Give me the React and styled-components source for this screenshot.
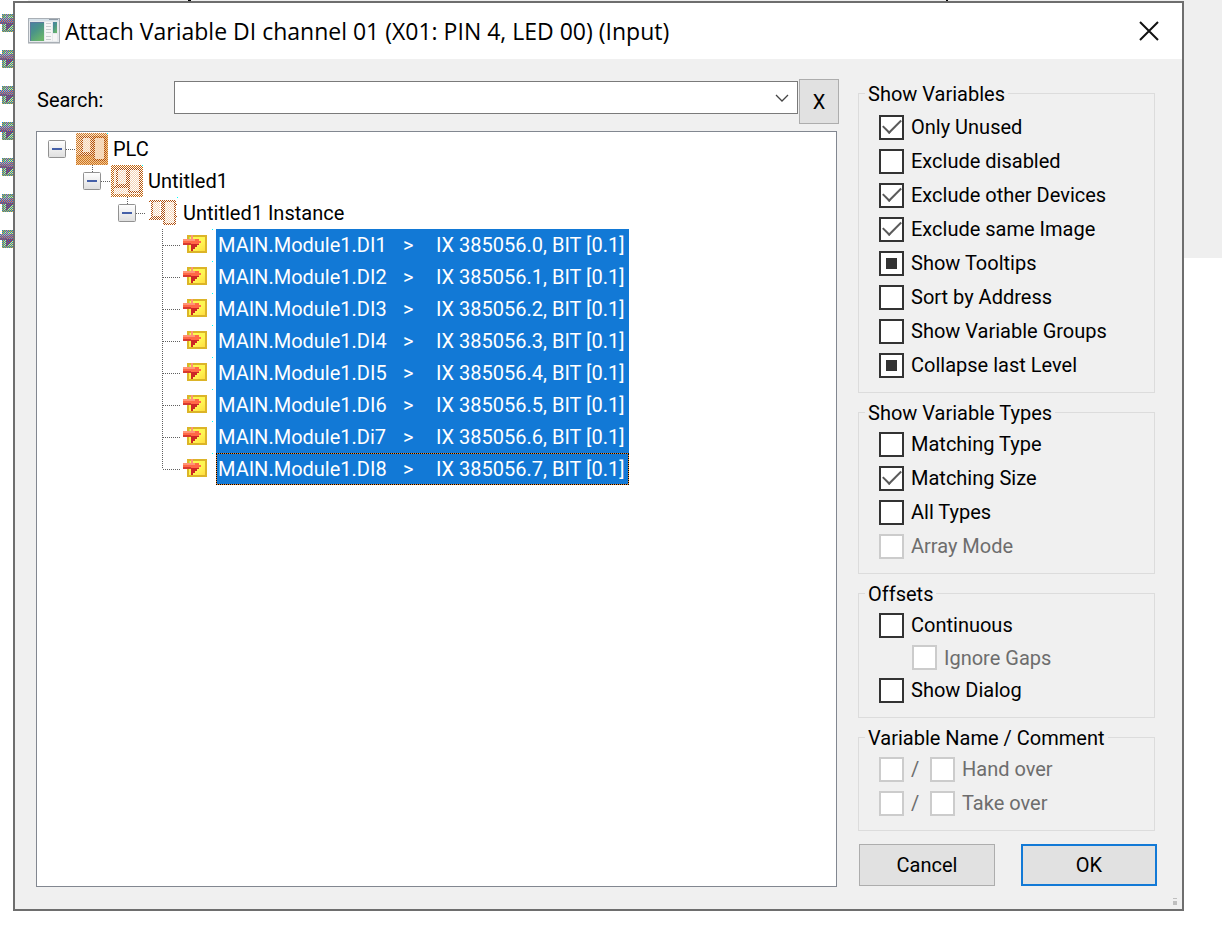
import React, { useEffect, useRef } from 'react';
import styled, { createGlobalStyle } from 'styled-components';

const Global = createGlobalStyle`
  * { box-sizing: border-box; }
  body {
    margin: 0;
    background: #ffffff;
    color: #000000;
    font: 20px/24px Roboto, "Liberation Sans", sans-serif;
  }
  button, select, input { font: inherit; color: inherit; margin: 0; }
`;

const Page = styled.div`
  display: grid;
  grid-template-columns: 13px minmax(0, 1fr) 38px;
  grid-template-rows: 1px auto;
  min-height: 100vh;
`;

const BackdropIcons = styled.div`
  grid-column: 1;
  grid-row: 1 / 3;
  display: flex;
  flex-direction: column;
  gap: 18px;
  padding-top: 14px;
`;

const BackdropStrip = styled.div`
  grid-column: 2;
  grid-row: 1;
  margin-left: 15px;
  background: #efefef;
  svg { display: block; width: 100%; height: 1px; }
`;

const BackdropPanel = styled.div`
  grid-column: 3;
  grid-row: 1 / 3;
  height: 258px;
  background: #efefef;
`;

const Dialog = styled.main`
  grid-column: 2;
  grid-row: 2;
  position: relative;
  display: flex;
  flex-direction: column;
  margin-bottom: 33px;
  border: 2px solid #6e6e6e;
  background: #f0f0f0;
`;

const TitleBar = styled.header`
  display: flex;
  align-items: center;
  gap: 5px;
  height: 56px;
  padding: 0 20px 0 13px;
  background: #ffffff;
`;

const Title = styled.h1`
  flex: 1;
  margin: 0;
  font: 400 23px/32px "Open Sans", "Noto Sans", sans-serif;
  white-space: nowrap;
`;

const CloseButton = styled.button`
  display: flex;
  padding: 3px;
  border: 0;
  background: none;
`;

const Body = styled.div`
  flex: 1;
  display: grid;
  grid-template-columns: minmax(0, 1fr) 299px;
  gap: 19px;
  padding: 20px 25px 22px 21px;
`;

const MainColumn = styled.section`
  display: flex;
  flex-direction: column;
  gap: 7px;
`;

const SearchRow = styled.div`
  display: grid;
  grid-template-columns: 138px 1fr 40px;
  height: 45px;
`;

const SearchLabel = styled.label`
  padding: 9px 1px;
`;

const Combo = styled.div`
  display: grid;
  height: 33px;
  margin: 2px 1px 0 0;
  > * { grid-area: 1 / 1; }
  svg { justify-self: end; align-self: center; margin-right: 9px; pointer-events: none; }
`;

const ComboSelect = styled.select`
  appearance: none;
  width: 100%;
  padding: 0 32px 0 6px;
  border: 1px solid #7a7a7a;
  border-radius: 0;
  background: #ffffff;
`;

const PushButton = styled.button`
  height: ${p => (p.$tall ? '45px' : '42px')};
  width: ${p => (p.$tall ? '40px' : '136px')};
  padding: 0;
  border: ${p => (p.$primary ? '2px solid #1279d6' : '1px solid #adadad')};
  background: #e1e1e1;
`;

const Tree = styled.div`
  flex: 1;
  margin-right: 2px;
  padding: 1px 0 0 11px;
  border: 1px solid #828790;
  background: #ffffff;
  overflow: hidden;
`;

const TreeRow = styled.div`
  display: flex;
  align-items: center;
  height: 32px;
  padding-left: ${p => p.$level * 35}px;
  white-space: nowrap;
  svg { display: block; flex: none; }
`;

const Twisty = styled.button`
  display: flex;
  padding: 0;
  border: 0;
  background: none;
`;

const NodeText = styled.span`
  margin-left: 3px;
  padding-left: 2px;
`;

const Variable = styled.span`
  display: grid;
  grid-template-columns: 185px 33px auto;
  align-items: center;
  width: 413px;
  height: 32px;
  margin-left: 3px;
  border: 1px ${p => (p.$focused ? 'dotted #000000' : 'solid #1279d6')};
  padding: 0 1px;
  color: #ffffff;
  background: linear-gradient(#1279d6, #1279d6) padding-box, #f08a30 border-box;
`;

const SideColumn = styled.aside`
  display: flex;
  flex-direction: column;
  gap: 7px;
  padding-top: 2px;
`;

const Group = styled.fieldset`
  min-width: 0;
  margin: 0 2px 0 0;
  padding: ${p => (p.$roomy ? '5px' : '3px')} 0 10px 20px;
  border: 1px solid #dcdcdc;
`;

const Legend = styled.legend`
  margin-left: -14px;
  padding: 0 3px;
  height: 24px;
  line-height: 26px;
`;

const CheckRow = styled.div`
  display: flex;
  align-items: center;
  gap: 7px;
  height: ${p => (p.$nested ? '31px' : '34px')};
  padding-left: ${p => (p.$nested ? '33px' : '0')};
  color: ${p => (p.$off ? '#6d6d6d' : '#000000')};
`;

const Slash = styled.span`
  width: 12px;
`;

const Box = styled.input`
  appearance: none;
  flex: none;
  display: grid;
  place-items: center;
  width: 25px;
  height: 25px;
  border: 2px solid #333333;
  background: #ffffff;
  &:disabled { border-color: #cccccc; }
  &:indeterminate::after {
    content: "";
    width: 11px;
    height: 11px;
    background: #333333;
  }
  &:checked::after {
    content: "";
    width: 16px;
    height: 8px;
    margin-bottom: 6px;
    border: solid #5a5a5a;
    border-width: 0 0 2px 2px;
    transform: rotate(-45deg);
  }
`;

const Actions = styled.div`
  display: flex;
  justify-content: space-between;
  padding: 6px 0 0 1px;
`;

const Grip = styled.span`
  position: absolute;
  right: 5px;
  bottom: 4px;
  width: 4px;
  height: 7px;
  border-top: 1px solid #bfbfbf;
  background: linear-gradient(#bfbfbf, #bfbfbf) bottom / 4px 4px no-repeat;
`;

function Patterns() {
  return (
    <svg width="0" height="0" style={{ position: 'absolute' }} aria-hidden="true">
      <defs>
        <pattern id="ditherOrange" width="2" height="2" patternUnits="userSpaceOnUse">
          <path d="M1 0h1v1H1zM0 1h1v1H0z" fill="#c4660e" />
        </pattern>
        <pattern id="ditherBrown" width="2" height="2" patternUnits="userSpaceOnUse">
          <path d="M1 0h1v1H1zM0 1h1v1H0z" fill="#b0500f" />
        </pattern>
        <pattern id="ditherPale" width="2" height="2" patternUnits="userSpaceOnUse">
          <path d="M1 0h1v1H1zM0 1h1v1H0z" fill="#f3d2b4" />
        </pattern>
        <pattern id="ditherBlue" width="2" height="2" patternUnits="userSpaceOnUse">
          <path d="M0 0h1v1H0zM1 1h1v1H1z" fill="#1279d6" />
        </pattern>
        <linearGradient id="yellowFill" x1="0" y1="0" x2="1" y2="1">
          <stop offset="0" stopColor="#f4ff50" />
          <stop offset="0.6" stopColor="#fff452" />
          <stop offset="1" stopColor="#ffd83c" />
        </linearGradient>
        <linearGradient id="buttonFill" x1="0" y1="0" x2="0" y2="1">
          <stop offset="0" stopColor="#ffffff" />
          <stop offset="1" stopColor="#dedede" />
        </linearGradient>
        <linearGradient id="screenFill" x1="0" y1="0" x2="0.6" y2="1">
          <stop offset="0" stopColor="#4a7fa6" />
          <stop offset="0.5" stopColor="#4a9488" />
          <stop offset="1" stopColor="#68b36c" />
        </linearGradient>
      </defs>
    </svg>
  );
}

function WindowIcon() {
  return (
    <svg width="32" height="26" viewBox="0 0 32 26" aria-hidden="true">
      <rect x="0.5" y="0.5" width="31" height="24" fill="#e6e9ec" stroke="#a9afb5" />
      <path d="M1 1h30v2H1z" fill="#d5e0e8" />
      <path d="M21 1h9v1h-9z" fill="#8f9aa5" />
      <path d="M0 25h32v1H0z" fill="#d0d3d6" />
      <rect x="2" y="4" width="14" height="19" fill="url(#screenFill)" />
      <path d="M2 4h14v1H2zM2 4h1v19H2z" fill="#5a7a9c" />
      <rect x="17" y="4" width="7" height="19" fill="#f6f6f6" />
      <path d="M18 5.5h5M18 8.5h5M18 11.5h5M18 14.5h5M18 18.5h5M18 21.5h5" stroke="#c9cdd0" />
      <rect x="25" y="4" width="4" height="11" fill="url(#screenFill)" />
      <rect x="25" y="16" width="4" height="7" fill="#f6f6f6" />
    </svg>
  );
}

function ArrowDrawing() {
  return (
    <>
      <rect x="5" y="1" width="18" height="16" fill="url(#yellowFill)" stroke="#dcb428" strokeWidth="2" />
      <path d="M8 0h2v4h6v2h2v2h-2v2h-2v2h-2v2h-2v2H8v-6H0V4h8z" fill="#ff6846" />
      <path d="M0 4h8V0h2v4h2v2H0z" fill="#ff9476" />
      <path d="M0 8h8v2H0z" fill="#d83a30" />
      <path d="M8 9h8v1h-2v2h-2v2h-2v2H8z" fill="#cc2626" />
      <path d="M6 2h1v2H6z" fill="#b8f050" />
    </>
  );
}

function ArrowIcon() {
  return (
    <svg width="32" height="32" viewBox="0 0 32 32" shapeRendering="crispEdges" aria-hidden="true">
      <g transform="translate(2 6)"><ArrowDrawing /></g>
      <path d="M31 0h1v1h-1z" fill="#00ffff" />
    </svg>
  );
}

function BackdropArrow() {
  return (
    <svg width="13" height="18" viewBox="2 0 13 18" shapeRendering="crispEdges" aria-hidden="true">
      <ArrowDrawing />
      <path d="M4 0h20v18H4zM0 4h4v6H0z" fill="url(#ditherBlue)" />
    </svg>
  );
}

function PlcIcon({ kind }) {
  return (
    <svg width="32" height="32" viewBox="0 0 32 32" shapeRendering="crispEdges" aria-hidden="true">
      {kind === 'plc' && (
        <>
          <rect width="32" height="32" fill="#fbe6cf" />
          <path d="M17 3h15v29H17zM0 22h17v10H0z" fill="#f4c894" />
          <rect width="32" height="32" fill="url(#ditherOrange)" opacity="0.85" />
        </>
      )}
      {kind === 'project' && (
        <>
          <rect width="32" height="32" fill="url(#ditherPale)" />
          <path d="M0 0h32v32H0zM3 3v26h26V3z" fillRule="evenodd" fill="url(#ditherOrange)" />
        </>
      )}
      <path d="M6 5h8v14H6zM18 5h10v21H18z" fill="#ffffff" opacity={kind === 'plc' ? 0.4 : 1} />
      <path d="M6 5h8v14H6zM18 5h10v21H18z" fill="url(#ditherPale)" />
      <path
        d="M3 4h13v16H6V4M3 22h14M18 4h11v23H18zM29 8h2M29 20h2"
        fill="none"
        stroke="url(#ditherBrown)"
        strokeWidth="2"
      />
      <path d="M31 0h1v1h-1z" fill="#00ffff" />
    </svg>
  );
}

function BranchDrawing({ root, leaf, last }) {
  return (
    <svg width="28" height="32" viewBox="0 0 28 32" aria-hidden="true">
      {leaf ? (
        <path d={`M9.5 0V${last ? 16 : 32}M10 16.5H28`} stroke="#606060" strokeDasharray="1 1" fill="none" />
      ) : (
        <>
          {!root && <path d="M9.5 0V7" stroke="#606060" strokeDasharray="1 1" />}
          <path d="M18 16.5H28" stroke="#606060" strokeDasharray="1 1" />
          <rect x="0.5" y="7.5" width="17" height="17" rx="1" fill="url(#buttonFill)" stroke="#919191" />
          <path d="M4 16h10" stroke="#4560a8" strokeWidth="2" />
        </>
      )}
    </svg>
  );
}

function Check({ id, label, on, mixed, off, nested }) {
  const ref = useRef(null);
  useEffect(() => {
    ref.current.indeterminate = Boolean(mixed);
  }, [mixed]);
  return (
    <CheckRow $nested={nested} $off={off}>
      <Box ref={ref} id={id} type="checkbox" defaultChecked={on} disabled={off} />
      <label htmlFor={id}>{label}</label>
    </CheckRow>
  );
}

function PairCheck({ id, label }) {
  return (
    <CheckRow $off>
      <Box type="checkbox" disabled aria-label={`${label} variable name`} />
      <Slash>/</Slash>
      <Box id={id} type="checkbox" disabled />
      <label htmlFor={id}>{label}</label>
    </CheckRow>
  );
}

const nodes = [
  { text: 'PLC', kind: 'plc' },
  { text: 'Untitled1', kind: 'project' },
  { text: 'Untitled1 Instance', kind: 'instance' },
];

const variables = ['DI1', 'DI2', 'DI3', 'DI4', 'DI5', 'DI6', 'Di7', 'DI8'];

export default function App() {
  return (
    <Page>
      <Global />
      <Patterns />
      <BackdropIcons>
        {Array.from({ length: 7 }, (_, i) => <BackdropArrow key={i} />)}
      </BackdropIcons>
      <BackdropStrip>
        <svg aria-hidden="true"><path d="M160 0h3v1h-3zM918 0h2v1h-2z" /></svg>
      </BackdropStrip>
      <BackdropPanel />
      <Dialog>
        <TitleBar>
          <WindowIcon />
          <Title>Attach Variable DI channel 01 (X01: PIN 4, LED 00) (Input)</Title>
          <CloseButton aria-label="Close">
            <svg width="20" height="20" viewBox="0 0 20 20">
              <path d="M1 1L19 19M19 1L1 19" stroke="#111111" strokeWidth="2" />
            </svg>
          </CloseButton>
        </TitleBar>
        <Body>
          <MainColumn>
            <SearchRow>
              <SearchLabel htmlFor="search">Search:</SearchLabel>
              <Combo>
                <ComboSelect id="search" />
                <svg width="14" height="8" viewBox="0 0 14 8">
                  <path d="M1 1L7 7L13 1" fill="none" stroke="#444444" strokeWidth="1.3" />
                </svg>
              </Combo>
              <PushButton $tall>X</PushButton>
            </SearchRow>
            <Tree role="tree" aria-label="Variables">
              {nodes.map((n, i) => (
                <TreeRow key={n.text} $level={i} role="treeitem" aria-expanded="true">
                  <Twisty aria-label={`Collapse ${n.text}`}><BranchDrawing root={i === 0} /></Twisty>
                  <PlcIcon kind={n.kind} />
                  <NodeText>{n.text}</NodeText>
                </TreeRow>
              ))}
              {variables.map((v, i) => (
                <TreeRow key={v} $level={3} role="treeitem" aria-selected="true">
                  <BranchDrawing leaf last={i === variables.length - 1} />
                  <ArrowIcon />
                  <Variable $focused={i === variables.length - 1}>
                    <span>MAIN.Module1.{v}</span>
                    <span>&gt;</span>
                    <span>IX 385056.{i}, BIT [0.1]</span>
                  </Variable>
                </TreeRow>
              ))}
            </Tree>
          </MainColumn>
          <SideColumn>
            <Group $roomy>
              <Legend>Show Variables</Legend>
              <Check id="unused" label="Only Unused" on />
              <Check id="disabled" label="Exclude disabled" />
              <Check id="devices" label="Exclude other Devices" on />
              <Check id="image" label="Exclude same Image" on />
              <Check id="tooltips" label="Show Tooltips" mixed />
              <Check id="sort" label="Sort by Address" />
              <Check id="groups" label="Show Variable Groups" />
              <Check id="collapse" label="Collapse last Level" mixed />
            </Group>
            <Group>
              <Legend>Show Variable Types</Legend>
              <Check id="type" label="Matching Type" />
              <Check id="size" label="Matching Size" on />
              <Check id="all" label="All Types" />
              <Check id="array" label="Array Mode" off />
            </Group>
            <Group>
              <Legend>Offsets</Legend>
              <Check id="continuous" label="Continuous" />
              <Check id="gaps" label="Ignore Gaps" off nested />
              <Check id="dialog" label="Show Dialog" />
            </Group>
            <Group>
              <Legend>Variable Name / Comment</Legend>
              <PairCheck id="hand" label="Hand over" />
              <PairCheck id="take" label="Take over" />
            </Group>
            <Actions>
              <PushButton>Cancel</PushButton>
              <PushButton $primary>OK</PushButton>
            </Actions>
          </SideColumn>
        </Body>
        <Grip />
      </Dialog>
    </Page>
  );
}
